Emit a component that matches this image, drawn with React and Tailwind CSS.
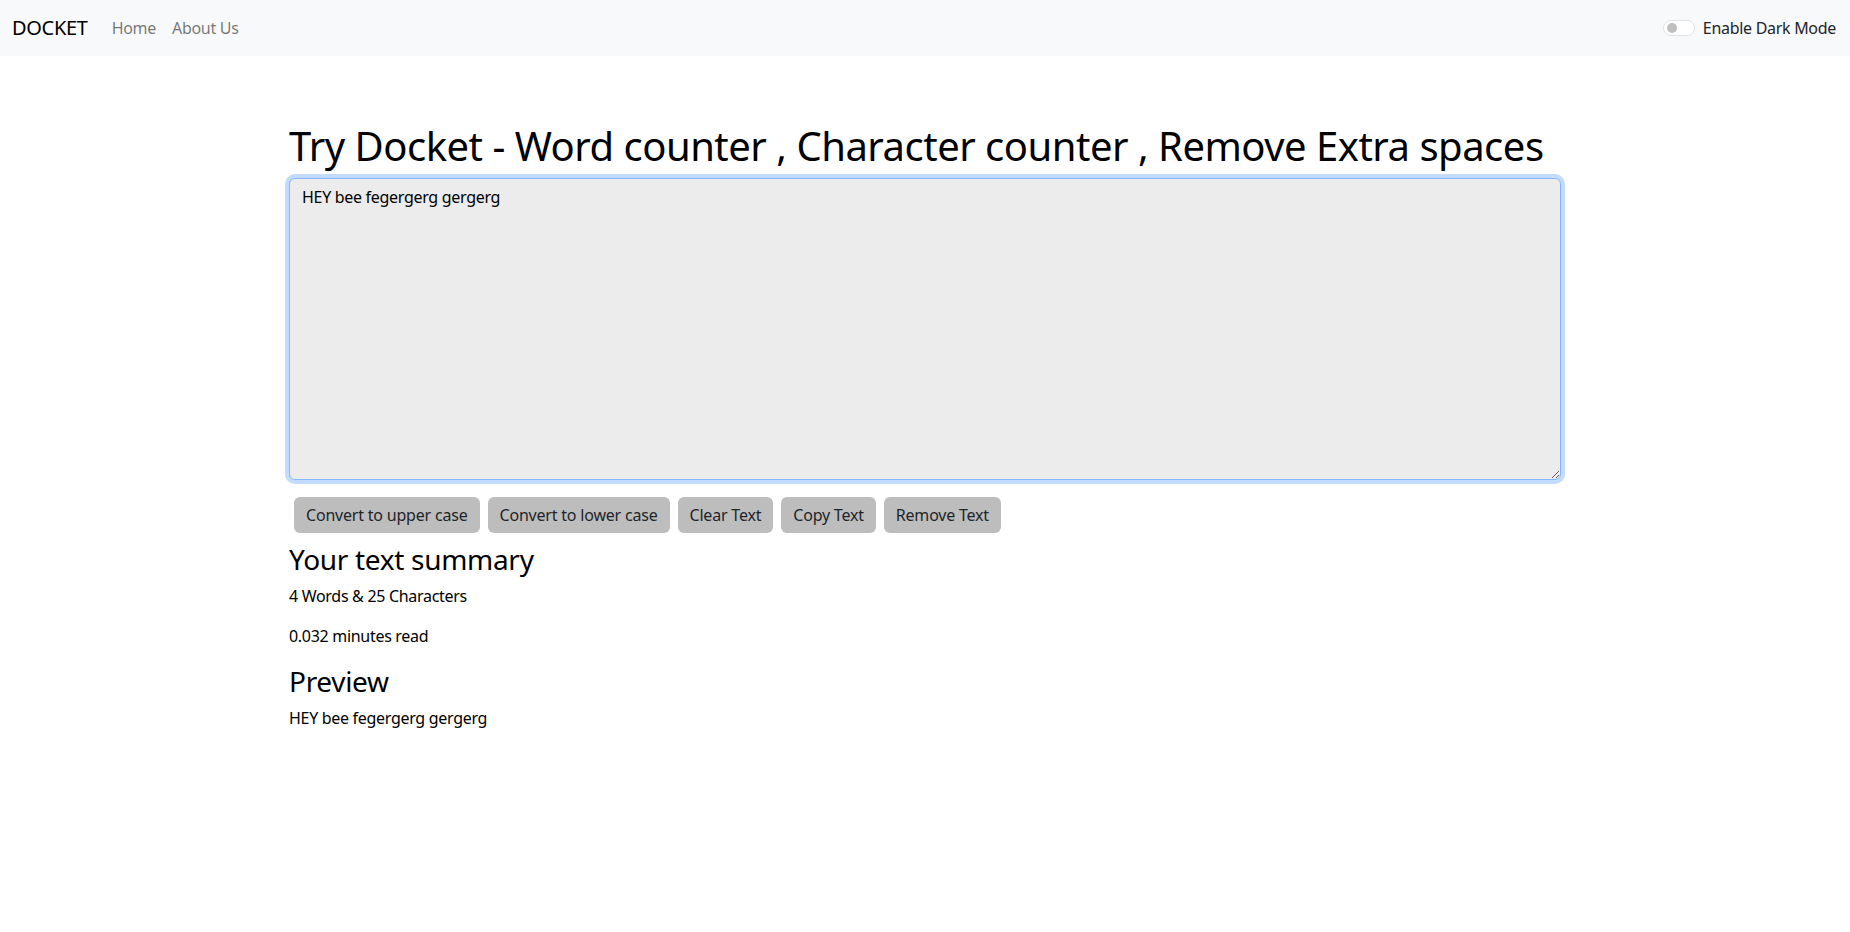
import { useState } from 'react';

export default function App() {
    const [text, setText] = useState('HEY bee fegergerg gergerg');

    const words = text.split(/\s+/).filter((w) => w.length !== 0).length;

    return (
        <div className="min-h-screen bg-white text-black" style={{ fontFamily: '"Noto Sans", "Open Sans", sans-serif' }}>
            {/* Navbar */}
            <nav className="flex h-14 items-center justify-between bg-[#f8f9fa] px-3">
                <div className="flex items-center tracking-[-0.3px]">
                    <a className="mr-4 text-xl text-black">DOCKET</a>
                    <a className="px-2 text-base text-black/55">Home</a>
                    <a className="px-2 text-base text-black/55">About Us</a>
                </div>
                <div className="flex items-center gap-2 pr-[2px]">
                    <span className="relative h-4 w-8 rounded-full border border-[#dee2e6] bg-white">
                        <span className="absolute left-[3px] top-[2px] h-[10px] w-[10px] rounded-full bg-[#bfbfbf]"></span>
                    </span>
                    <span className="text-base tracking-[-0.3px] text-[#212529]">Enable Dark Mode</span>
                </div>
            </nav>

            {/* Main */}
            <div className="mx-auto w-[1272px] pt-[66px] tracking-[-0.3px]">
                <h1 className="mb-2 whitespace-nowrap text-[40px] leading-[48px] font-normal tracking-[-0.5px]">
                    Try Docket - Word counter , Character counter , Remove Extra spaces
                </h1>
                <textarea
                    className="block h-[302px] w-full resize-y rounded-md border border-[#86b7fe] bg-[#ececec] px-3 py-[6px] text-base leading-6 text-black shadow-[0_0_0_4px_rgba(13,110,253,0.25)] outline-none"
                    value={text}
                    onChange={(e) => setText(e.target.value)}
                ></textarea>

                <div className="mt-[17px] flex gap-[8px] pl-[5px] tracking-[-0.2px]">
                    <button className="h-9 rounded-md bg-[#bdbdbd] px-3 text-base text-[#212529]" onClick={() => setText(text.toUpperCase())}>Convert to upper case</button>
                    <button className="h-9 rounded-md bg-[#bdbdbd] px-3 text-base text-[#212529]" onClick={() => setText(text.toLowerCase())}>Convert to lower case</button>
                    <button className="h-9 rounded-md bg-[#bdbdbd] px-3 text-base text-[#212529]" onClick={() => setText('')}>Clear Text</button>
                    <button className="h-9 rounded-md bg-[#bdbdbd] px-3 text-base text-[#212529]">Copy Text</button>
                    <button className="h-9 rounded-md bg-[#bdbdbd] px-3 text-base text-[#212529]" onClick={() => setText(text.split(/[ ]+/).join(' '))}>Remove Text</button>
                </div>

                <div className="mt-[9px]">
                    <h3 className="mb-2 text-[28px] leading-[34px]">Your text summary</h3>
                    <p className="mb-4 text-base leading-6">{words} Words &amp; {text.length} Characters</p>
                    <p className="mb-4 text-base leading-6">{0.008 * words} minutes read</p>
                    <h3 className="mb-2 text-[28px] leading-[34px]">Preview</h3>
                    <p className="text-base leading-6">{text}</p>
                </div>
            </div>
        </div>
    );
}
